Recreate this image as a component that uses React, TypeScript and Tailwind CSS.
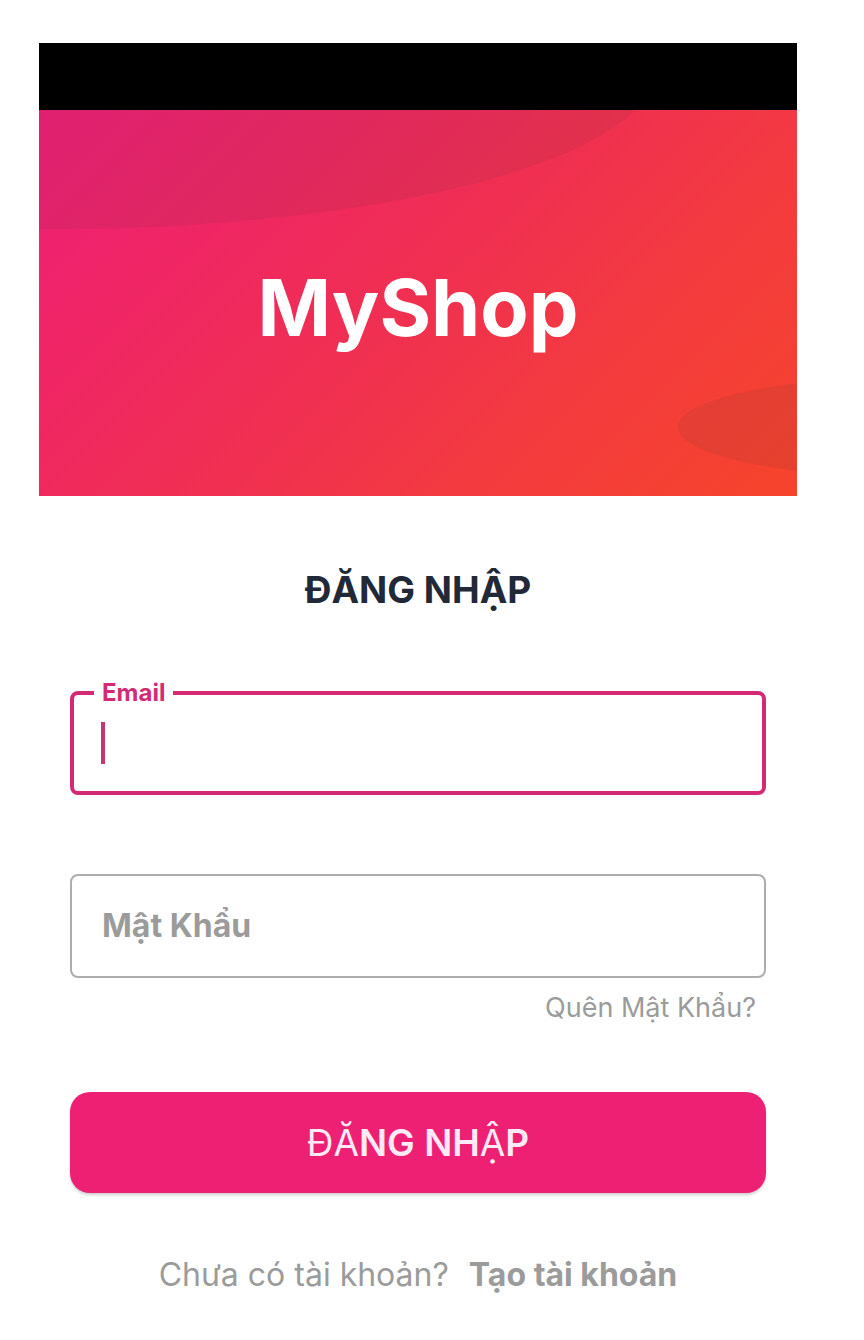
import { useState } from "react";

function Banner() {
  return (
    <header>
      <div className="h-[67px] bg-black" />
      <div className="relative flex h-[386px] items-center justify-center overflow-hidden bg-[linear-gradient(135deg,#ee1f76_0%,#ef2664_25%,#f03050_50%,#f33b3e_72%,#f5442b_100%)]">
        <svg
          className="absolute inset-0 h-full w-full"
          viewBox="0 0 758 386"
          preserveAspectRatio="none"
          aria-hidden="true"
        >
          <ellipse cx="16" cy="-41" rx="600" ry="160" fill="#303030" fillOpacity="0.08" />
          <ellipse cx="869" cy="317" rx="230" ry="50" fill="#303030" fillOpacity="0.08" />
        </svg>
        <h1 className="relative pt-2 text-[79px] leading-[96px] font-bold text-white">MyShop</h1>
      </div>
    </header>
  );
}

export default function App() {
  const [email, setEmail] = useState("");
  const [password, setPassword] = useState("");

  return (
    <main className="min-h-screen bg-white pt-[43px] pr-[67px] pb-8 pl-[39px] font-['Inter','Noto_Sans',sans-serif]">
      <Banner />
      <form className="flex flex-col px-[31px] pt-[72px]" onSubmit={(e) => e.preventDefault()}>
        <h2 className="text-center text-[37px] leading-[44px] font-bold text-[#212838]">ĐĂNG NHẬP</h2>

        <fieldset className="mt-[69px] h-[114px] rounded-lg border-4 border-[#d42a76] px-5">
          <legend className="h-6 px-2 text-[24px] leading-6 font-bold text-[#d42a76]">
            <label htmlFor="email">Email</label>
          </legend>
          <div className="flex items-center pt-[17px] pl-[7px]">
            <span className="h-[42px] w-1 bg-[#c93474]" />
            <input
              id="email"
              type="email"
              value={email}
              onChange={(e) => setEmail(e.target.value)}
              className="h-10 min-w-0 flex-1 pl-1 text-[32px] text-[#212838] caret-transparent outline-none"
            />
          </div>
        </fieldset>

        <div className="relative mt-[79px]">
          <input
            id="password"
            type="password"
            value={password}
            onChange={(e) => setPassword(e.target.value)}
            className="block h-[104px] w-full rounded-lg border-2 border-[#adadad] px-[30px] text-[32px] text-[#212838] outline-none"
          />
          {password === "" && (
            <label
              htmlFor="password"
              className="pointer-events-none absolute inset-y-0 left-8 flex items-center text-[32px] font-bold text-[#9b9b9b]"
            >
              Mật Khẩu
            </label>
          )}
        </div>

        <a href="#forgot" className="mt-3 mr-[10px] self-end text-[27px] leading-9 text-[#9b9b9b]">
          Quên Mật Khẩu?
        </a>

        <button
          type="submit"
          className="mt-[66px] h-[101px] rounded-[20px] bg-[#ed2074] text-[37px] font-semibold text-[#ffeaf5] shadow-[0_2px_3px_rgba(0,0,0,0.2)]"
        >
          <span className="font-normal">ĐĂ</span>NG NH<span className="font-normal">Ậ</span>P
        </button>

        <p className="mt-[62px] flex flex-wrap justify-center gap-x-5 text-[32px] leading-10 text-[#9b9b9b]">
          <span>Chưa có tài khoản?</span>
          <a href="#register" className="font-bold">
            Tạo tài khoản
          </a>
        </p>
      </form>
    </main>
  );
}
